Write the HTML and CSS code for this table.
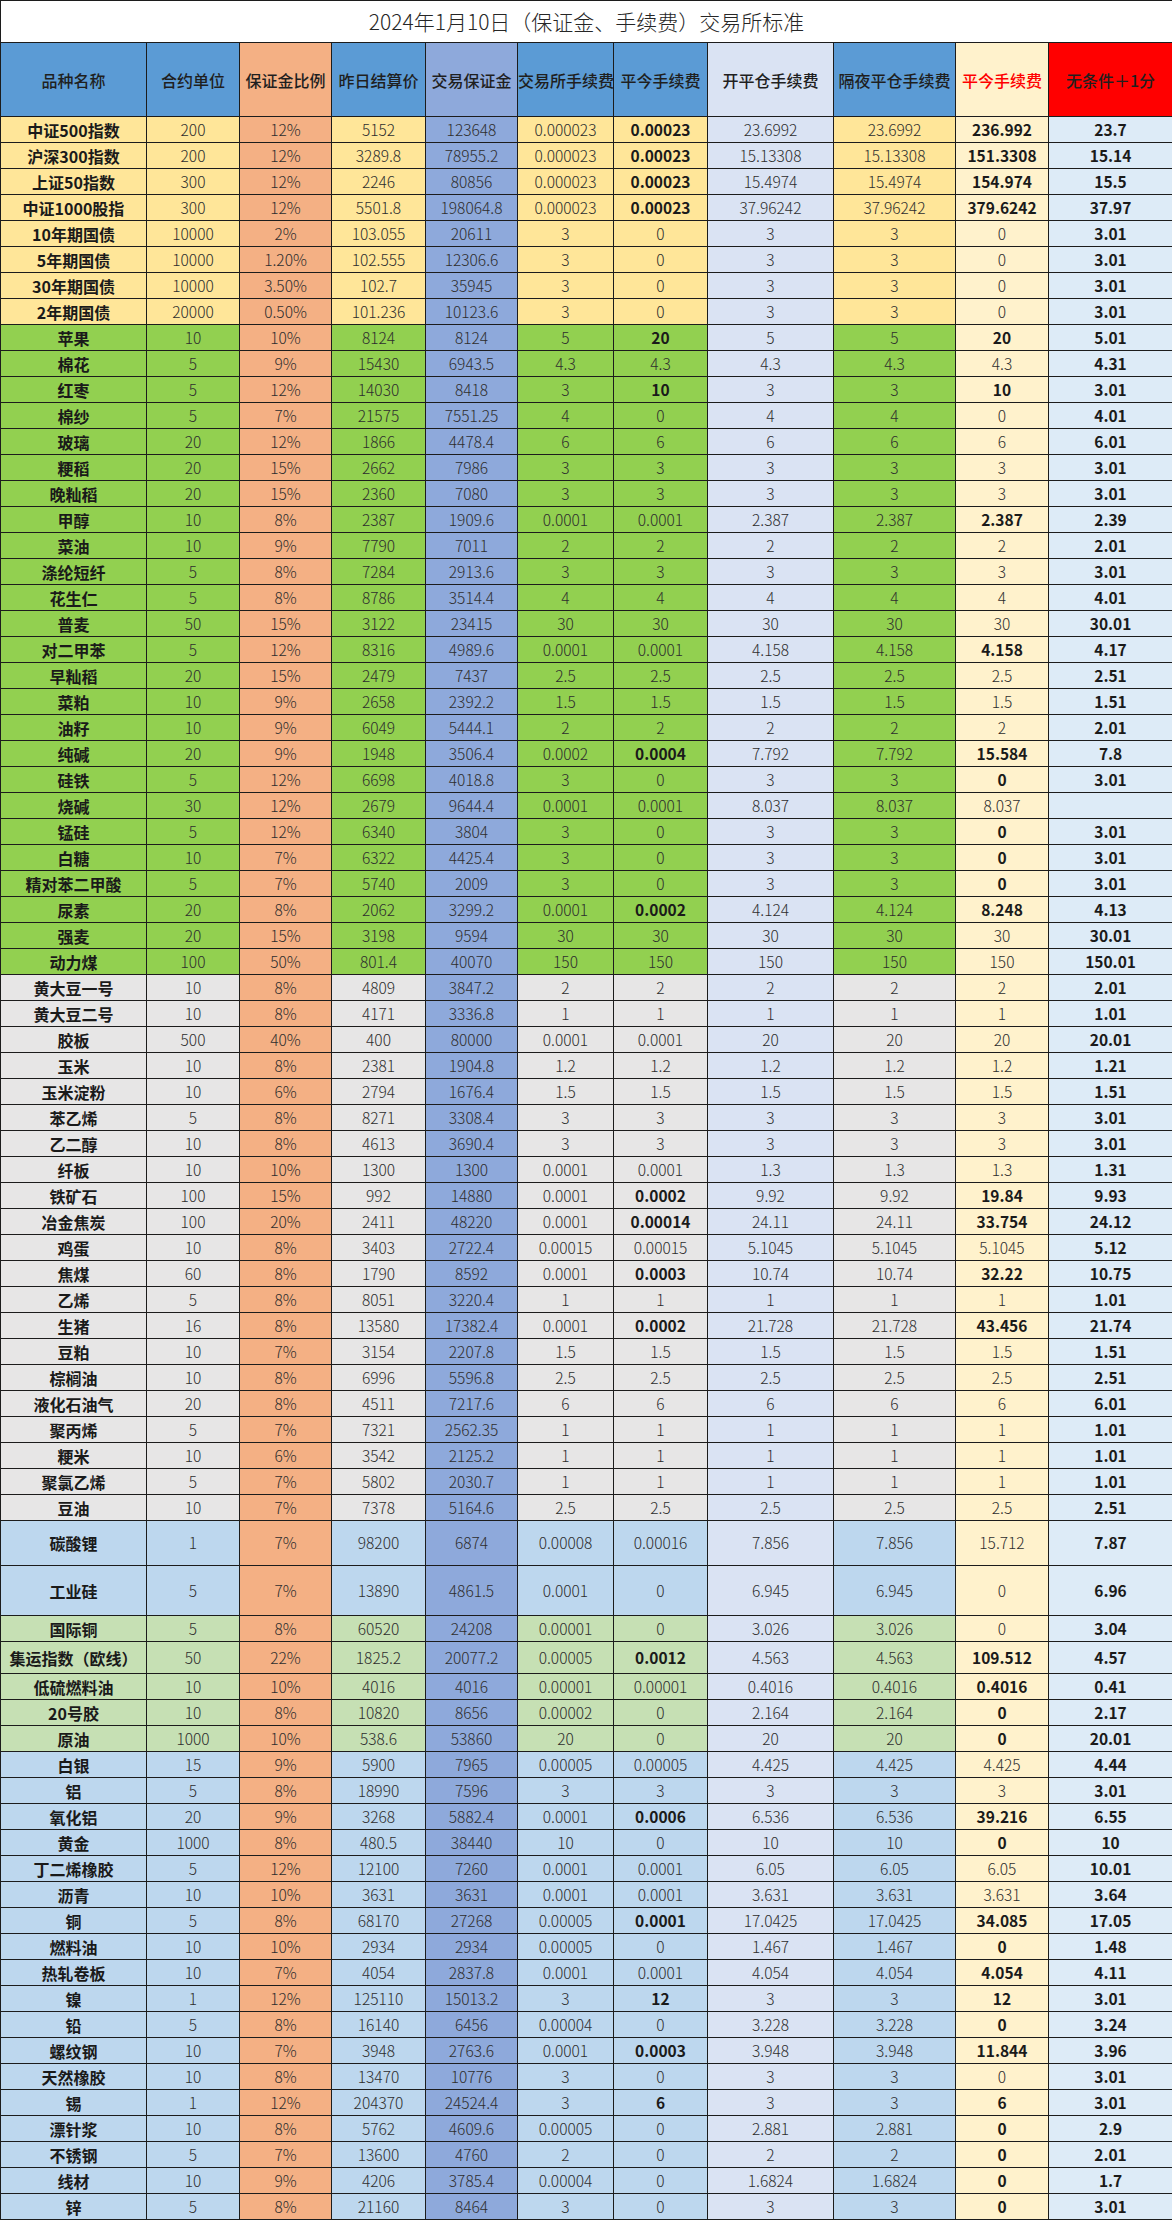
FILE: index.html
```html
<!DOCTYPE html>
<html lang="zh-CN">
<head>
<meta charset="utf-8">
<title>交易所标准</title>
<link rel="stylesheet" href="styles.css">
</head>
<body>
<table class="sheet">
<colgroup>
<col class="c1"><col class="c2"><col class="c3"><col class="c4"><col class="c5"><col class="c6"><col class="c7"><col class="c8"><col class="c9"><col class="c10"><col class="c11">
</colgroup>
<tbody>
<tr class="title"><td colspan="11">2024年1月10日（保证金、手续费）交易所标准</td></tr>
<tr class="head"><th>品种名称</th><th>合约单位</th><th class="h-or">保证金比例</th><th>昨日结算价</th><th class="h-pw">交易保证金</th><th>交易所手续费</th><th>平今手续费</th><th class="h-lv">开平仓手续费</th><th>隔夜平仓手续费</th><th class="h-cr">平今手续费</th><th class="h-rd">无条件＋1分</th></tr>

<tr class="ga"><td>中证500指数</td><td>200</td><td>12%</td><td>5152</td><td>123648</td><td>0.000023</td><td class="b">0.00023</td><td>23.6992</td><td>23.6992</td><td class="b">236.992</td><td>23.7</td></tr>
<tr class="ga"><td>沪深300指数</td><td>200</td><td>12%</td><td>3289.8</td><td>78955.2</td><td>0.000023</td><td class="b">0.00023</td><td>15.13308</td><td>15.13308</td><td class="b">151.3308</td><td>15.14</td></tr>
<tr class="ga"><td>上证50指数</td><td>300</td><td>12%</td><td>2246</td><td>80856</td><td>0.000023</td><td class="b">0.00023</td><td>15.4974</td><td>15.4974</td><td class="b">154.974</td><td>15.5</td></tr>
<tr class="ga"><td>中证1000股指</td><td>300</td><td>12%</td><td>5501.8</td><td>198064.8</td><td>0.000023</td><td class="b">0.00023</td><td>37.96242</td><td>37.96242</td><td class="b">379.6242</td><td>37.97</td></tr>
<tr class="ga"><td>10年期国债</td><td>10000</td><td>2%</td><td>103.055</td><td>20611</td><td>3</td><td>0</td><td>3</td><td>3</td><td>0</td><td>3.01</td></tr>
<tr class="ga"><td>5年期国债</td><td>10000</td><td>1.20%</td><td>102.555</td><td>12306.6</td><td>3</td><td>0</td><td>3</td><td>3</td><td>0</td><td>3.01</td></tr>
<tr class="ga"><td>30年期国债</td><td>10000</td><td>3.50%</td><td>102.7</td><td>35945</td><td>3</td><td>0</td><td>3</td><td>3</td><td>0</td><td>3.01</td></tr>
<tr class="ga"><td>2年期国债</td><td>20000</td><td>0.50%</td><td>101.236</td><td>10123.6</td><td>3</td><td>0</td><td>3</td><td>3</td><td>0</td><td>3.01</td></tr>

<tr class="gb"><td>苹果</td><td>10</td><td>10%</td><td>8124</td><td>8124</td><td>5</td><td class="b">20</td><td>5</td><td>5</td><td class="b">20</td><td>5.01</td></tr>
<tr class="gb"><td>棉花</td><td>5</td><td>9%</td><td>15430</td><td>6943.5</td><td>4.3</td><td>4.3</td><td>4.3</td><td>4.3</td><td>4.3</td><td>4.31</td></tr>
<tr class="gb"><td>红枣</td><td>5</td><td>12%</td><td>14030</td><td>8418</td><td>3</td><td class="b">10</td><td>3</td><td>3</td><td class="b">10</td><td>3.01</td></tr>
<tr class="gb"><td>棉纱</td><td>5</td><td>7%</td><td>21575</td><td>7551.25</td><td>4</td><td>0</td><td>4</td><td>4</td><td>0</td><td>4.01</td></tr>
<tr class="gb"><td>玻璃</td><td>20</td><td>12%</td><td>1866</td><td>4478.4</td><td>6</td><td>6</td><td>6</td><td>6</td><td>6</td><td>6.01</td></tr>
<tr class="gb"><td>粳稻</td><td>20</td><td>15%</td><td>2662</td><td>7986</td><td>3</td><td>3</td><td>3</td><td>3</td><td>3</td><td>3.01</td></tr>
<tr class="gb"><td>晚籼稻</td><td>20</td><td>15%</td><td>2360</td><td>7080</td><td>3</td><td>3</td><td>3</td><td>3</td><td>3</td><td>3.01</td></tr>
<tr class="gb"><td>甲醇</td><td>10</td><td>8%</td><td>2387</td><td>1909.6</td><td>0.0001</td><td>0.0001</td><td>2.387</td><td>2.387</td><td class="b">2.387</td><td>2.39</td></tr>
<tr class="gb"><td>菜油</td><td>10</td><td>9%</td><td>7790</td><td>7011</td><td>2</td><td>2</td><td>2</td><td>2</td><td>2</td><td>2.01</td></tr>
<tr class="gb"><td>涤纶短纤</td><td>5</td><td>8%</td><td>7284</td><td>2913.6</td><td>3</td><td>3</td><td>3</td><td>3</td><td>3</td><td>3.01</td></tr>
<tr class="gb"><td>花生仁</td><td>5</td><td>8%</td><td>8786</td><td>3514.4</td><td>4</td><td>4</td><td>4</td><td>4</td><td>4</td><td>4.01</td></tr>
<tr class="gb"><td>普麦</td><td>50</td><td>15%</td><td>3122</td><td>23415</td><td>30</td><td>30</td><td>30</td><td>30</td><td>30</td><td>30.01</td></tr>
<tr class="gb"><td>对二甲苯</td><td>5</td><td>12%</td><td>8316</td><td>4989.6</td><td>0.0001</td><td>0.0001</td><td>4.158</td><td>4.158</td><td class="b">4.158</td><td>4.17</td></tr>
<tr class="gb"><td>早籼稻</td><td>20</td><td>15%</td><td>2479</td><td>7437</td><td>2.5</td><td>2.5</td><td>2.5</td><td>2.5</td><td>2.5</td><td>2.51</td></tr>
<tr class="gb"><td>菜粕</td><td>10</td><td>9%</td><td>2658</td><td>2392.2</td><td>1.5</td><td>1.5</td><td>1.5</td><td>1.5</td><td>1.5</td><td>1.51</td></tr>
<tr class="gb"><td>油籽</td><td>10</td><td>9%</td><td>6049</td><td>5444.1</td><td>2</td><td>2</td><td>2</td><td>2</td><td>2</td><td>2.01</td></tr>
<tr class="gb"><td>纯碱</td><td>20</td><td>9%</td><td>1948</td><td>3506.4</td><td>0.0002</td><td class="b">0.0004</td><td>7.792</td><td>7.792</td><td class="b">15.584</td><td>7.8</td></tr>
<tr class="gb"><td>硅铁</td><td>5</td><td>12%</td><td>6698</td><td>4018.8</td><td>3</td><td>0</td><td>3</td><td>3</td><td class="b">0</td><td>3.01</td></tr>
<tr class="gb"><td>烧碱</td><td>30</td><td>12%</td><td>2679</td><td>9644.4</td><td>0.0001</td><td>0.0001</td><td>8.037</td><td>8.037</td><td>8.037</td><td></td></tr>
<tr class="gb"><td>锰硅</td><td>5</td><td>12%</td><td>6340</td><td>3804</td><td>3</td><td>0</td><td>3</td><td>3</td><td class="b">0</td><td>3.01</td></tr>
<tr class="gb"><td>白糖</td><td>10</td><td>7%</td><td>6322</td><td>4425.4</td><td>3</td><td>0</td><td>3</td><td>3</td><td class="b">0</td><td>3.01</td></tr>
<tr class="gb"><td>精对苯二甲酸</td><td>5</td><td>7%</td><td>5740</td><td>2009</td><td>3</td><td>0</td><td>3</td><td>3</td><td class="b">0</td><td>3.01</td></tr>
<tr class="gb"><td>尿素</td><td>20</td><td>8%</td><td>2062</td><td>3299.2</td><td>0.0001</td><td class="b">0.0002</td><td>4.124</td><td>4.124</td><td class="b">8.248</td><td>4.13</td></tr>
<tr class="gb"><td>强麦</td><td>20</td><td>15%</td><td>3198</td><td>9594</td><td>30</td><td>30</td><td>30</td><td>30</td><td>30</td><td>30.01</td></tr>
<tr class="gb"><td>动力煤</td><td>100</td><td>50%</td><td>801.4</td><td>40070</td><td>150</td><td>150</td><td>150</td><td>150</td><td>150</td><td>150.01</td></tr>

<tr class="gc"><td>黄大豆一号</td><td>10</td><td>8%</td><td>4809</td><td>3847.2</td><td>2</td><td>2</td><td>2</td><td>2</td><td>2</td><td>2.01</td></tr>
<tr class="gc"><td>黄大豆二号</td><td>10</td><td>8%</td><td>4171</td><td>3336.8</td><td>1</td><td>1</td><td>1</td><td>1</td><td>1</td><td>1.01</td></tr>
<tr class="gc"><td>胶板</td><td>500</td><td>40%</td><td>400</td><td>80000</td><td>0.0001</td><td>0.0001</td><td>20</td><td>20</td><td>20</td><td>20.01</td></tr>
<tr class="gc"><td>玉米</td><td>10</td><td>8%</td><td>2381</td><td>1904.8</td><td>1.2</td><td>1.2</td><td>1.2</td><td>1.2</td><td>1.2</td><td>1.21</td></tr>
<tr class="gc"><td>玉米淀粉</td><td>10</td><td>6%</td><td>2794</td><td>1676.4</td><td>1.5</td><td>1.5</td><td>1.5</td><td>1.5</td><td>1.5</td><td>1.51</td></tr>
<tr class="gc"><td>苯乙烯</td><td>5</td><td>8%</td><td>8271</td><td>3308.4</td><td>3</td><td>3</td><td>3</td><td>3</td><td>3</td><td>3.01</td></tr>
<tr class="gc"><td>乙二醇</td><td>10</td><td>8%</td><td>4613</td><td>3690.4</td><td>3</td><td>3</td><td>3</td><td>3</td><td>3</td><td>3.01</td></tr>
<tr class="gc"><td>纤板</td><td>10</td><td>10%</td><td>1300</td><td>1300</td><td>0.0001</td><td>0.0001</td><td>1.3</td><td>1.3</td><td>1.3</td><td>1.31</td></tr>
<tr class="gc"><td>铁矿石</td><td>100</td><td>15%</td><td>992</td><td>14880</td><td>0.0001</td><td class="b">0.0002</td><td>9.92</td><td>9.92</td><td class="b">19.84</td><td>9.93</td></tr>
<tr class="gc"><td>冶金焦炭</td><td>100</td><td>20%</td><td>2411</td><td>48220</td><td>0.0001</td><td class="b">0.00014</td><td>24.11</td><td>24.11</td><td class="b">33.754</td><td>24.12</td></tr>
<tr class="gc"><td>鸡蛋</td><td>10</td><td>8%</td><td>3403</td><td>2722.4</td><td>0.00015</td><td>0.00015</td><td>5.1045</td><td>5.1045</td><td>5.1045</td><td>5.12</td></tr>
<tr class="gc"><td>焦煤</td><td>60</td><td>8%</td><td>1790</td><td>8592</td><td>0.0001</td><td class="b">0.0003</td><td>10.74</td><td>10.74</td><td class="b">32.22</td><td>10.75</td></tr>
<tr class="gc"><td>乙烯</td><td>5</td><td>8%</td><td>8051</td><td>3220.4</td><td>1</td><td>1</td><td>1</td><td>1</td><td>1</td><td>1.01</td></tr>
<tr class="gc"><td>生猪</td><td>16</td><td>8%</td><td>13580</td><td>17382.4</td><td>0.0001</td><td class="b">0.0002</td><td>21.728</td><td>21.728</td><td class="b">43.456</td><td>21.74</td></tr>
<tr class="gc"><td>豆粕</td><td>10</td><td>7%</td><td>3154</td><td>2207.8</td><td>1.5</td><td>1.5</td><td>1.5</td><td>1.5</td><td>1.5</td><td>1.51</td></tr>
<tr class="gc"><td>棕榈油</td><td>10</td><td>8%</td><td>6996</td><td>5596.8</td><td>2.5</td><td>2.5</td><td>2.5</td><td>2.5</td><td>2.5</td><td>2.51</td></tr>
<tr class="gc"><td>液化石油气</td><td>20</td><td>8%</td><td>4511</td><td>7217.6</td><td>6</td><td>6</td><td>6</td><td>6</td><td>6</td><td>6.01</td></tr>
<tr class="gc"><td>聚丙烯</td><td>5</td><td>7%</td><td>7321</td><td>2562.35</td><td>1</td><td>1</td><td>1</td><td>1</td><td>1</td><td>1.01</td></tr>
<tr class="gc"><td>粳米</td><td>10</td><td>6%</td><td>3542</td><td>2125.2</td><td>1</td><td>1</td><td>1</td><td>1</td><td>1</td><td>1.01</td></tr>
<tr class="gc"><td>聚氯乙烯</td><td>5</td><td>7%</td><td>5802</td><td>2030.7</td><td>1</td><td>1</td><td>1</td><td>1</td><td>1</td><td>1.01</td></tr>
<tr class="gc"><td>豆油</td><td>10</td><td>7%</td><td>7378</td><td>5164.6</td><td>2.5</td><td>2.5</td><td>2.5</td><td>2.5</td><td>2.5</td><td>2.51</td></tr>

<tr class="gd t45"><td>碳酸锂</td><td>1</td><td>7%</td><td>98200</td><td>6874</td><td>0.00008</td><td>0.00016</td><td>7.856</td><td>7.856</td><td>15.712</td><td>7.87</td></tr>
<tr class="gd t50"><td>工业硅</td><td>5</td><td>7%</td><td>13890</td><td>4861.5</td><td>0.0001</td><td>0</td><td>6.945</td><td>6.945</td><td>0</td><td>6.96</td></tr>

<tr class="ge"><td>国际铜</td><td>5</td><td>8%</td><td>60520</td><td>24208</td><td>0.00001</td><td>0</td><td>3.026</td><td>3.026</td><td>0</td><td>3.04</td></tr>
<tr class="ge t32"><td>集运指数（欧线）</td><td>50</td><td>22%</td><td>1825.2</td><td>20077.2</td><td>0.00005</td><td class="b">0.0012</td><td>4.563</td><td>4.563</td><td class="b">109.512</td><td>4.57</td></tr>
<tr class="ge"><td>低硫燃料油</td><td>10</td><td>10%</td><td>4016</td><td>4016</td><td>0.00001</td><td>0.00001</td><td>0.4016</td><td>0.4016</td><td class="b">0.4016</td><td>0.41</td></tr>
<tr class="ge"><td>20号胶</td><td>10</td><td>8%</td><td>10820</td><td>8656</td><td>0.00002</td><td>0</td><td>2.164</td><td>2.164</td><td class="b">0</td><td>2.17</td></tr>
<tr class="ge"><td>原油</td><td>1000</td><td>10%</td><td>538.6</td><td>53860</td><td>20</td><td>0</td><td>20</td><td>20</td><td class="b">0</td><td>20.01</td></tr>

<tr class="gf"><td>白银</td><td>15</td><td>9%</td><td>5900</td><td>7965</td><td>0.00005</td><td>0.00005</td><td>4.425</td><td>4.425</td><td>4.425</td><td>4.44</td></tr>
<tr class="gf"><td>铝</td><td>5</td><td>8%</td><td>18990</td><td>7596</td><td>3</td><td>3</td><td>3</td><td>3</td><td>3</td><td>3.01</td></tr>
<tr class="gf"><td>氧化铝</td><td>20</td><td>9%</td><td>3268</td><td>5882.4</td><td>0.0001</td><td class="b">0.0006</td><td>6.536</td><td>6.536</td><td class="b">39.216</td><td>6.55</td></tr>
<tr class="gf"><td>黄金</td><td>1000</td><td>8%</td><td>480.5</td><td>38440</td><td>10</td><td>0</td><td>10</td><td>10</td><td class="b">0</td><td>10</td></tr>
<tr class="gf"><td>丁二烯橡胶</td><td>5</td><td>12%</td><td>12100</td><td>7260</td><td>0.0001</td><td>0.0001</td><td>6.05</td><td>6.05</td><td>6.05</td><td>10.01</td></tr>
<tr class="gf"><td>沥青</td><td>10</td><td>10%</td><td>3631</td><td>3631</td><td>0.0001</td><td>0.0001</td><td>3.631</td><td>3.631</td><td>3.631</td><td>3.64</td></tr>
<tr class="gf"><td>铜</td><td>5</td><td>8%</td><td>68170</td><td>27268</td><td>0.00005</td><td class="b">0.0001</td><td>17.0425</td><td>17.0425</td><td class="b">34.085</td><td>17.05</td></tr>
<tr class="gf"><td>燃料油</td><td>10</td><td>10%</td><td>2934</td><td>2934</td><td>0.00005</td><td>0</td><td>1.467</td><td>1.467</td><td class="b">0</td><td>1.48</td></tr>
<tr class="gf"><td>热轧卷板</td><td>10</td><td>7%</td><td>4054</td><td>2837.8</td><td>0.0001</td><td>0.0001</td><td>4.054</td><td>4.054</td><td class="b">4.054</td><td>4.11</td></tr>
<tr class="gf"><td>镍</td><td>1</td><td>12%</td><td>125110</td><td>15013.2</td><td>3</td><td class="b">12</td><td>3</td><td>3</td><td class="b">12</td><td>3.01</td></tr>
<tr class="gf"><td>铅</td><td>5</td><td>8%</td><td>16140</td><td>6456</td><td>0.00004</td><td>0</td><td>3.228</td><td>3.228</td><td class="b">0</td><td>3.24</td></tr>
<tr class="gf"><td>螺纹钢</td><td>10</td><td>7%</td><td>3948</td><td>2763.6</td><td>0.0001</td><td class="b">0.0003</td><td>3.948</td><td>3.948</td><td class="b">11.844</td><td>3.96</td></tr>
<tr class="gf"><td>天然橡胶</td><td>10</td><td>8%</td><td>13470</td><td>10776</td><td>3</td><td>0</td><td>3</td><td>3</td><td>0</td><td>3.01</td></tr>
<tr class="gf"><td>锡</td><td>1</td><td>12%</td><td>204370</td><td>24524.4</td><td>3</td><td class="b">6</td><td>3</td><td>3</td><td class="b">6</td><td>3.01</td></tr>
<tr class="gf"><td>漂针浆</td><td>10</td><td>8%</td><td>5762</td><td>4609.6</td><td>0.00005</td><td>0</td><td>2.881</td><td>2.881</td><td class="b">0</td><td>2.9</td></tr>
<tr class="gf"><td>不锈钢</td><td>5</td><td>7%</td><td>13600</td><td>4760</td><td>2</td><td>0</td><td>2</td><td>2</td><td class="b">0</td><td>2.01</td></tr>
<tr class="gf"><td>线材</td><td>10</td><td>9%</td><td>4206</td><td>3785.4</td><td>0.00004</td><td>0</td><td>1.6824</td><td>1.6824</td><td class="b">0</td><td>1.7</td></tr>
<tr class="gf"><td>锌</td><td>5</td><td>8%</td><td>21160</td><td>8464</td><td>3</td><td>0</td><td>3</td><td>3</td><td class="b">0</td><td>3.01</td></tr>
</tbody>
</table>
</body>
</html>
```
FILE: styles.css
```css
html, body {
  margin: 0;
  padding: 0;
  background: #ffffff;
}

body {
  font-family: "Noto Sans CJK SC", "Noto Sans", sans-serif;
  color: #2e2e2e;
}

.sheet {
  width: 1172px;
  border-collapse: collapse;
  table-layout: fixed;
}

.c1 { width: 146px; }
.c2 { width: 93px; }
.c3 { width: 92px; }
.c4 { width: 94px; }
.c5 { width: 92px; }
.c6 { width: 96px; }
.c7 { width: 94px; }
.c8 { width: 126px; }
.c9 { width: 122px; }
.c10 { width: 93px; }
.c11 { width: 124px; }

.sheet td,
.sheet th {
  border: 1px solid #1c1c1c;
  padding: 0;
  text-align: center;
  vertical-align: middle;
  white-space: nowrap;
  overflow: hidden;
  line-height: 1;
}

.sheet tr { height: 26px; }

.title { height: 42px !important; }

.head { height: 74px !important; }
.head th {
  background: #5b9bd5;
  font-size: 16px;
  font-weight: 500;
  color: #1f1f1f;
}
.head .h-or { background: #f4b084; }
.head .h-pw { background: #8ea9db; }
.head .h-lv { background: #dae3f3; }
.head .h-cr { background: #fff2cc; color: #ff0000; }
.head .h-rd { background: #ff0000; }

.t45 { height: 45px !important; }
.t50 { height: 50px !important; }
.t32 { height: 32px !important; }

.ga td, .gb td, .gc td, .gd td, .ge td, .gf td {
  font-size: 15.5px;
  font-weight: 300;
}

.ga td { background: #ffe699; }
.gb td { background: #92d050; }
.gc td { background: #e7e6e6; }
.gd td { background: #bdd7ee; }
.ge td { background: #c6e0b4; }
.gf td { background: #bdd7ee; }

.sheet tr td:nth-child(3) { background: #f4b084; }
.sheet tr td:nth-child(5) { background: #8ea9db; }
.sheet tr td:nth-child(8) { background: #dae3f3; }
.sheet tr td:nth-child(10) { background: #fff2cc; }
.sheet tr td:nth-child(11) { background: #ddebf7; }

.sheet tr td:nth-child(1) {
  font-size: 16px;
  font-weight: 700;
  color: #1a1a1a;
}

.sheet tr td:nth-child(11),
.sheet td.b {
  font-weight: 700;
  color: #1a1a1a;
}

.sheet .title td:nth-child(1) {
  background: #ffffff;
  font-size: 21px;
  font-weight: 300;
  color: #262626;
}
```
